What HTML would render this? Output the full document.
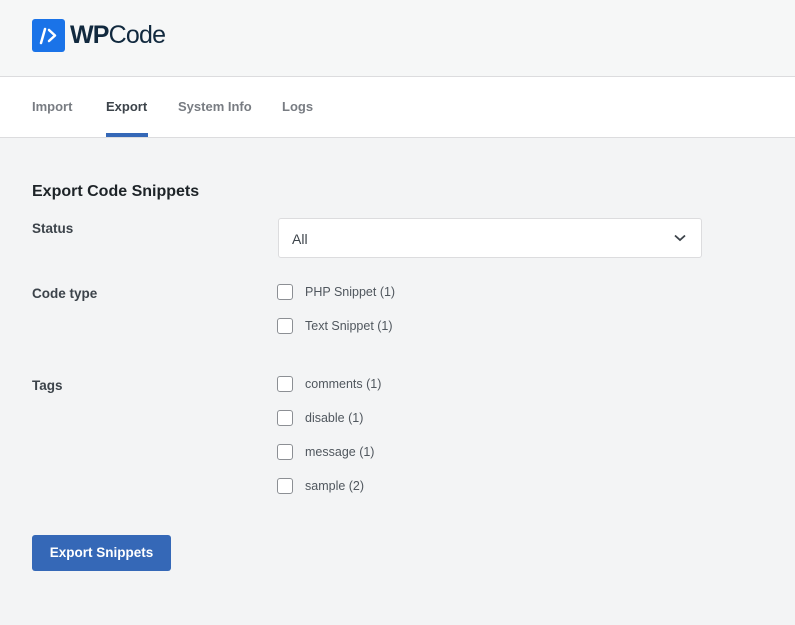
<!DOCTYPE html>
<html><head><style>
*{margin:0;padding:0;box-sizing:border-box}
body{width:795px;height:625px;background:#f3f4f5;font-family:"Liberation Sans",sans-serif;position:relative;overflow:hidden;color:#3c434a}
.hdr{position:absolute;left:0;top:0;width:795px;height:77px;background:#f6f7f7;border-bottom:1px solid #dcdcde}
.logo{position:absolute;left:32px;top:19px;width:33px;height:33px;background:#1a73e8;border-radius:3px}
.brand{position:absolute;left:70px;top:21px;font-size:25px;color:#11293e;letter-spacing:-0.8px}
.tabs{position:absolute;left:0;top:77px;width:795px;height:61px;background:#fff;border-bottom:1px solid #dcdcde}
.tab{position:absolute;top:22px;font-size:13px;font-weight:bold;color:#787c82}
.tab.a{color:#3c434a}
.ul{position:absolute;left:106px;top:56px;width:42px;height:4px;background:#3568b7}
h2{position:absolute;left:32px;top:183px;font-size:16px;font-weight:bold;color:#1d2327}
.lbl{position:absolute;left:32px;font-size:13.5px;font-weight:bold;color:#3c434a}
.sel{position:absolute;left:278px;top:218px;width:424px;height:40px;background:#fff;border:1px solid #dcdcde;border-radius:3px;font-size:14px;padding:12px 0 0 13px;color:#3c434a}
.cb{position:absolute;left:277px;width:16px;height:16px;border:1px solid #8c8f94;border-radius:3px;background:#fff}
.ct{position:absolute;left:305px;font-size:12.5px;color:#50575e}
.btn{position:absolute;left:32px;top:535px;width:139px;height:36px;background:#3568b7;border-radius:3px;color:#fff;font-weight:bold;font-size:13.5px;text-align:center;line-height:36px}
</style></head><body>
<div class="hdr">
<div class="logo"><svg width="33" height="33" viewBox="0 0 33 33"><path d="M13 10 L9 24" stroke="#fff" stroke-width="2.5" stroke-linecap="round"/><path d="M17 11 L23 16.5 L17 22" stroke="#fff" stroke-width="2.5" fill="none" stroke-linecap="round" stroke-linejoin="round"/></svg></div>
<div class="brand"><b>WP</b>Code</div>
</div>
<div class="tabs">
<div class="tab" style="left:32px">Import</div>
<div class="tab a" style="left:106px">Export</div>
<div class="tab" style="left:178px">System Info</div>
<div class="tab" style="left:282px">Logs</div>
<div class="ul"></div>
</div>
<h2>Export Code Snippets</h2>
<div class="lbl" style="top:221px">Status</div>
<div class="sel">All<svg style="position:absolute;right:15px;top:15px" width="12" height="8" viewBox="0 0 12 8"><path d="M1 1.5 L6 6 L11 1.5" stroke="#3c434a" stroke-width="1.8" fill="none"/></svg></div>
<div class="lbl" style="top:286px">Code type</div>
<div class="cb" style="top:284px"></div><div class="ct" style="top:285px">PHP Snippet (1)</div>
<div class="cb" style="top:318px"></div><div class="ct" style="top:319px">Text Snippet (1)</div>
<div class="lbl" style="top:378px">Tags</div>
<div class="cb" style="top:376px"></div><div class="ct" style="top:377px">comments (1)</div>
<div class="cb" style="top:410px"></div><div class="ct" style="top:411px">disable (1)</div>
<div class="cb" style="top:444px"></div><div class="ct" style="top:445px">message (1)</div>
<div class="cb" style="top:478px"></div><div class="ct" style="top:479px">sample (2)</div>
<div class="btn">Export Snippets</div>
</body></html>
